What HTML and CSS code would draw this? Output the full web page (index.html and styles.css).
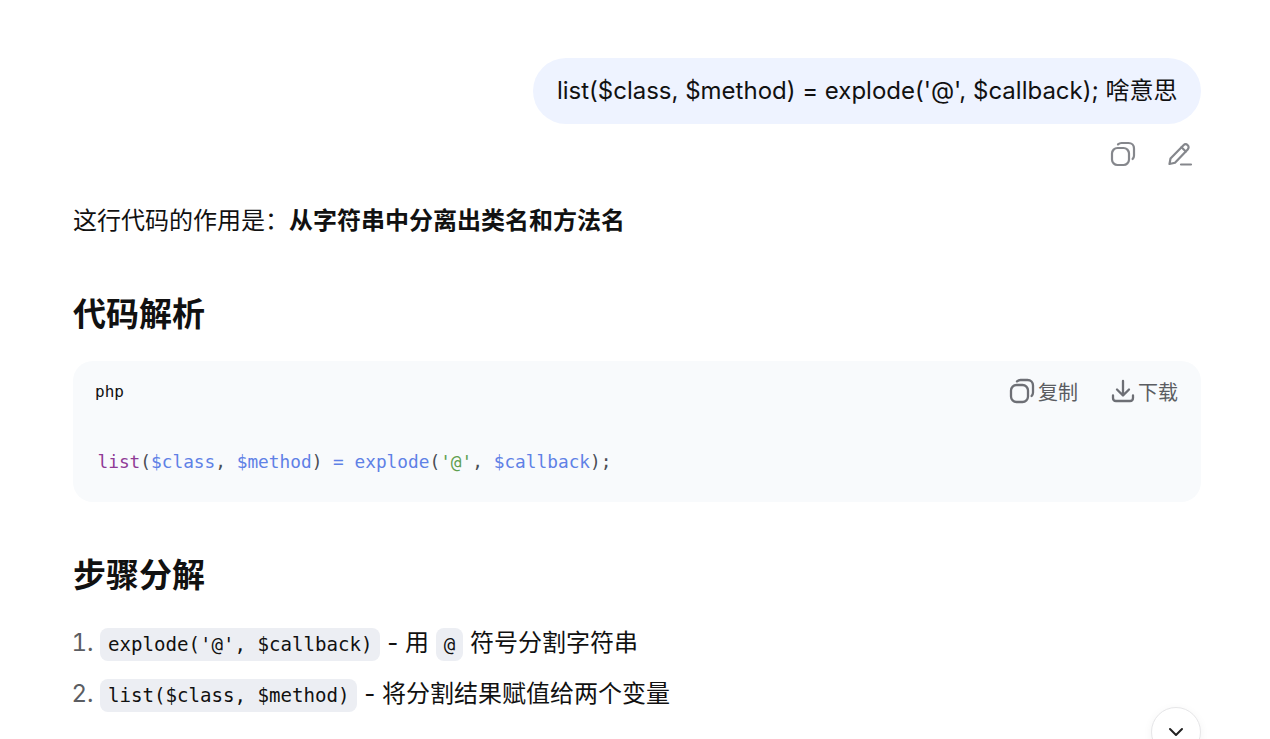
FILE: index.html
```html
<!DOCTYPE html>
<html lang="zh-CN">
<head>
    <meta charset="UTF-8">
    <title>Chat</title>
    <link rel="stylesheet" href="styles.css">
</head>
<body>
    <main class="chat">
        <div class="user-row">
            <div class="bubble">list($class, $method) = explode('@', $callback); 啥意思</div>
        </div>
        <div class="user-actions">
            <svg class="icon" width="26" height="26" viewBox="0 0 26 26" fill="none"><rect x="2" y="7" width="17" height="17" rx="5.5"/><path d="M8 3.4C9 2.500 10 2 11.500 2h7C21.800 2 24 4.200 24 7.500v7c0 1.500-.5 2.500-1.400 3.500"/></svg>
            <svg class="icon" width="26" height="26" viewBox="0 0 26 26" fill="none"><path d="M2.500 23l1-5.500L16.500 4.200c1.200-1.200 3-1.200 4.200 0s1.200 3 0 4.200L8 21.800z"/><path d="M14.500 6.200l4.300 4.300M14 23.500h10"/></svg>
        </div>

        <p class="answer">这行代码的作用是&#xFF1A;<strong>从字符串中分离出类名和方法名</strong></p>

        <h2 class="first">代码解析</h2>

        <section class="code-card">
            <div class="code-head">
                <span class="lang">php</span>
                <div class="code-tools">
                    <span class="tool">
                        <svg class="icon" width="26" height="26" viewBox="0 0 26 26" fill="none"><rect x="2" y="7" width="17" height="17" rx="5.500"/><path d="M8 3.400C9 2.500 10 2 11.500 2h7C21.800 2 24 4.200 24 7.500v7c0 1.500-.5 2.500-1.400 3.500"/></svg>
                        复制
                    </span>
                    <span class="tool">
                        <svg class="icon" width="24" height="24" viewBox="0 0 24 24" fill="none"><path d="M12 2v14M6 10.500l6 6 6-6M2 16.500V19c0 1.700 1.300 3 3 3h14c1.700 0 3-1.300 3-3v-2.500"/></svg>
                        下载
                    </span>
                </div>
            </div>
            <pre class="code"><span class="kw">list</span>(<span class="var">$class</span>, <span class="var">$method</span>) <span class="var">=</span> <span class="var">explode</span>(<span class="str">'@'</span>, <span class="var">$callback</span>);</pre>
        </section>

        <h2>步骤分解</h2>

        <ol class="steps">
            <li><code>explode('@', $callback)</code> - 用 <code>@</code> 符号分割字符串</li>
            <li><code>list($class, $method)</code> - 将分割结果赋值给两个变量</li>
        </ol>
    </main>

    <button class="scroll-down">
        <svg width="18" height="18" viewBox="0 0 18 18" fill="none"><path d="M3 6l6 6 6-6"/></svg>
    </button>
</body>
</html>
```

FILE: styles.css
```css
html, body {
    height: 739px;
    overflow: hidden;
}

body {
    margin: 0;
    background: #fff;
    color: #111;
    font-family: Inter, "Noto Sans CJK SC", sans-serif;
    font-size: 24px;
}

.chat {
    padding: 58px 69px 0 73px;
}

.user-row {
    display: flex;
    justify-content: flex-end;
}

.bubble {
    padding: 0 23.5px;
    height: 66px;
    line-height: 66px;
    border-radius: 33px;
    background: #eef3ff;
    white-space: nowrap;
}

.user-actions {
    display: flex;
    justify-content: flex-end;
    gap: 31px;
    padding: 17px 8px 0 0;
    height: 26px;
}

.icon {
    stroke: #85878c;
    stroke-width: 2.2;
    stroke-linecap: round;
    stroke-linejoin: round;
}

.answer {
    margin: 35px 0 0;
    line-height: 38px;
}

strong {
    font-weight: 700;
}

h2 {
    margin: 51px 0 0;
    font-size: 33px;
    line-height: 44px;
    font-weight: 700;
}

h2.first {
    margin-top: 52px;
}

.code-card {
    margin-top: 25px;
    height: 141px;
    border-radius: 20px;
    background: #f8fafc;
}

.code-head {
    display: flex;
    justify-content: space-between;
    align-items: center;
    padding: 16px 23px 0 22px;
    height: 28px;
}

.lang {
    font-family: "DejaVu Sans Mono", monospace;
    font-size: 16px;
}

.code-tools {
    display: flex;
    gap: 33px;
}

.tool {
    display: flex;
    align-items: center;
    gap: 3px;
    height: 26px;
    font-size: 20px;
    color: #5b5d62;
}

.tool .icon {
    stroke: #6d6f75;
    stroke-width: 2.3;
}

.code {
    margin: 0;
    padding: 43px 25px 0 24.5px;
    font-family: "DejaVu Sans Mono", monospace;
    font-size: 17.8px;
    line-height: 28px;
    color: #4a4d55;
}

.kw { color: #8f3a96; }
.var { color: #5f81e6; }
.str { color: #5fa050; }

.steps {
    margin: 20px 0 0;
    padding: 0 0 0 27px;
    line-height: 51px;
}

.steps li::marker {
    color: #5b5d62;
}

code {
    display: inline-block;
    padding: 0 8px;
    height: 33px;
    line-height: 33px;
    border-radius: 8px;
    background: #eceef3;
    font-family: "DejaVu Sans Mono", monospace;
    font-size: 19.1px;
    color: #111;
}

.scroll-down {
    position: absolute;
    left: 1151px;
    top: 707px;
    width: 50px;
    height: 50px;
    padding: 0;
    display: flex;
    align-items: center;
    justify-content: center;
    border: 1px solid #e6e6e8;
    border-radius: 50%;
    background: #fff;
    box-shadow: 0 2px 10px rgba(0, 0, 0, 0.05);
}

.scroll-down svg {
    stroke: #222;
    stroke-width: 2;
    stroke-linecap: round;
    stroke-linejoin: round;
}
```
